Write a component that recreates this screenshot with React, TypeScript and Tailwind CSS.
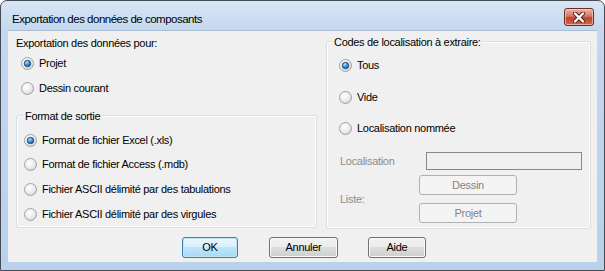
import { useId } from "react";

type OptionProps = {
  checked?: boolean;
  className?: string;
  label: string;
};

type WinButtonProps = {
  className?: string;
  disabled?: boolean;
  isDefault?: boolean;
  label: string;
};

function Radio({ checked }: { checked?: boolean }) {
  const id = useId().replace(/[^a-zA-Z0-9_-]/g, "");

  return (
    <svg className="shrink-0" width="13" height="13" viewBox="0 0 13 13">
      <defs>
        <radialGradient id={`${id}bg`} cx="40%" cy="35%" r="70%">
          <stop offset="0%" stopColor="#ffffff" />
          <stop offset="60%" stopColor="#ececec" />
          <stop offset="100%" stopColor="#cfcfcf" />
        </radialGradient>
        <radialGradient id={`${id}dot`} cx="40%" cy="35%" r="70%">
          <stop offset="0%" stopColor="#b6e6fc" />
          <stop offset="50%" stopColor="#3a8fd0" />
          <stop offset="100%" stopColor="#174a80" />
        </radialGradient>
      </defs>
      <circle cx="6.5" cy="6.5" r="6" fill={`url(#${id}bg)`} stroke="#a2a2a2" />
      {checked ? (
        <circle
          cx="6.5"
          cy="6.5"
          r="3.3"
          fill={`url(#${id}dot)`}
          stroke="#1d4f86"
          strokeWidth="0.8"
        />
      ) : null}
    </svg>
  );
}

function Option({ checked, className = "", label }: OptionProps) {
  return (
    <div className={`flex h-4 items-center gap-[5px] ${className}`}>
      <Radio checked={checked} />
      <span className="whitespace-nowrap leading-4">{label}</span>
    </div>
  );
}

function WinButton({ className = "", disabled, isDefault, label }: WinButtonProps) {
  const look = disabled
    ? "border-[#adb2b5] bg-[#f4f4f4] text-[#838383]"
    : isDefault
      ? "border-[#3c7fb1] bg-[linear-gradient(to_bottom,#eaf6fd_0%,#d9f0fc_50%,#bee6fd_50%,#a7d9f5_100%)] text-black shadow-[inset_0_0_0_1px_#c4e5f6]"
      : "border-[#707070] bg-[linear-gradient(to_bottom,#f2f2f2_0%,#ebebeb_50%,#dddddd_50%,#cfcfcf_100%)] text-black shadow-[inset_0_0_0_1px_#fbfbfb]";

  return (
    <button
      className={`flex items-center justify-center rounded-[3px] border text-[11px] tracking-[-0.3px] ${look} ${className}`}
      type="button"
    >
      {label}
    </button>
  );
}

function CloseButton() {
  return (
    <div className="mt-[7px] flex h-[18px] w-[30px] items-center justify-center rounded-[3px] border border-[#6b2a22] bg-[linear-gradient(to_bottom,#eab3a8_0%,#d67565_45%,#c3422e_55%,#d0694f_100%)] shadow-[inset_0_0_0_1px_rgba(255,220,210,0.6)]">
      <svg width="14" height="11" viewBox="0 0 14 11">
        <path d="M3 1.5 L11 9.5 M11 1.5 L3 9.5" stroke="#4a1d17" strokeWidth="4" strokeLinecap="round" />
        <path d="M3 1.5 L11 9.5 M11 1.5 L3 9.5" stroke="#ffffff" strokeWidth="2.4" strokeLinecap="round" />
      </svg>
    </div>
  );
}

export default function App() {
  return (
    <div className="h-[271px] w-[605px] overflow-hidden bg-white font-['Liberation_Sans',Arial,sans-serif]">
      <div className="flex h-[271px] w-[605px] flex-col rounded-t-[7px] border border-[#434b56] bg-[linear-gradient(to_bottom,#d8e6f5_0px,#c4d8ee_30px,#b9d1ea_100%)] px-[7px] pb-[7px]">
        <div className="flex h-[29px] items-start justify-between pl-[4px] pr-[3px]">
          <span className="mt-[10px] text-[11.5px] leading-4 tracking-[-0.5px] text-black">
            Exportation des données de composants
          </span>
          <CloseButton />
        </div>

        <div className="flex h-[232px] flex-col border-t border-[#a9bcd2] bg-[#f0f0f0] text-[11px] tracking-[-0.3px] text-black">
          <div className="flex pl-[8px]">
            <div className="flex w-[301px] flex-col">
              <div className="mt-[4px] flex h-4 items-center whitespace-nowrap">
                Exportation des données pour:
              </div>
              <Option checked className="ml-[5px] mt-[4px]" label="Projet" />
              <Option className="ml-[5px] mt-[9px]" label="Dessin courant" />

              <div className="relative mt-[19px] h-[113px] rounded-[3px] border border-[#d5dfe5] pl-[7px] pt-[16px] shadow-[inset_0_0_0_1px_#ffffff]">
                <span className="absolute -top-[8px] left-[6px] h-4 bg-[#f0f0f0] px-[2px] leading-4">
                  Format de sortie
                </span>
                <Option checked label="Format de fichier Excel (.xls)" />
                <Option className="mt-[8px]" label="Format de fichier Access (.mdb)" />
                <Option className="mt-[9px]" label="Fichier ASCII délimité par des tabulations" />
                <Option className="mt-[9px]" label="Fichier ASCII délimité par des virgules" />
              </div>
            </div>

            <div className="relative ml-[9px] mt-[10px] h-[188px] w-[265px] rounded-[3px] border border-[#d5dfe5] pl-[12px] pt-[15px] shadow-[inset_0_0_0_1px_#ffffff]">
              <span className="absolute -top-[8px] left-[5px] h-4 whitespace-nowrap bg-[#f0f0f0] px-[2px] leading-4">
                Codes de localisation à extraire:
              </span>
              <Option checked label="Tous" />
              <Option className="mt-[16px]" label="Vide" />
              <Option className="mt-[15px]" label="Localisation nommée" />

              <div className="mt-[16px] flex h-[18px] items-center pl-[1px] text-[#8d8d8d]">
                <span className="w-[86px]">Localisation</span>
                <div className="h-[18px] w-[156px] border border-[#828790] bg-[#f0f0f0]" />
              </div>

              <div className="mt-[5px] flex items-center pl-[1px] text-[#8d8d8d]">
                <span className="w-[79px]">Liste:</span>
                <div className="flex flex-col gap-[8px]">
                  <WinButton disabled className="h-[20px] w-[98px]" label="Dessin" />
                  <WinButton disabled className="h-[20px] w-[98px]" label="Projet" />
                </div>
              </div>
            </div>
          </div>

          <div className="mt-[8px] flex pl-[174px]">
            <WinButton isDefault className="h-[21px] w-[56px]" label="OK" />
            <WinButton className="ml-[31px] h-[21px] w-[69px]" label="Annuler" />
            <WinButton className="ml-[30px] h-[21px] w-[58px]" label="Aide" />
          </div>
        </div>
      </div>
    </div>
  );
}
